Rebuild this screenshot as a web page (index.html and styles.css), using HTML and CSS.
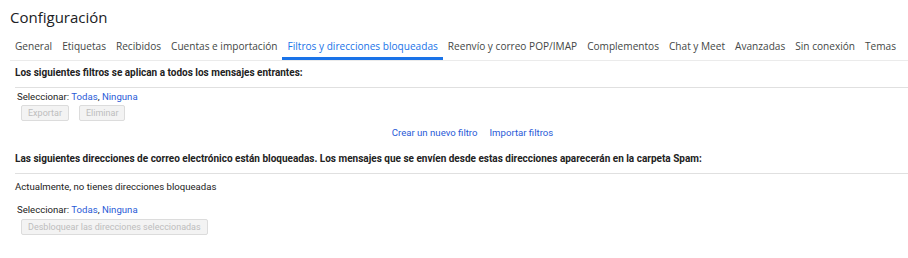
FILE: index.html
```html
<!DOCTYPE html>
<html lang="es">
<head>
<meta charset="utf-8">
<title>Configuración</title>
<link rel="stylesheet" href="styles.css">
</head>
<body>
<div class="page">
  <h1 class="title">Configuración</h1>
  <nav class="tabs">
    <a class="tab">General</a>
    <a class="tab">Etiquetas</a>
    <a class="tab">Recibidos</a>
    <a class="tab">Cuentas e importación</a>
    <a class="tab active">Filtros y direcciones bloqueadas</a>
    <a class="tab">Reenvío y correo POP/IMAP</a>
    <a class="tab">Complementos</a>
    <a class="tab">Chat y Meet</a>
    <a class="tab">Avanzadas</a>
    <a class="tab">Sin conexión</a>
    <a class="tab">Temas</a>
  </nav>
  <section class="section">
    <h2 class="heading">Los siguientes filtros se aplican a todos los mensajes entrantes:</h2>
    <div class="select">Seleccionar: <a class="link">Todas</a>, <a class="link">Ninguna</a></div>
    <div class="buttons">
      <button class="btn" disabled>Exportar</button>
      <button class="btn" disabled>Eliminar</button>
    </div>
    <div class="actions">
      <a class="link">Crear un nuevo filtro</a>
      <a class="link">Importar filtros</a>
    </div>
  </section>
  <section class="section second">
    <h2 class="heading">Las siguientes direcciones de correo electrónico están bloqueadas. Los mensajes que se envíen desde estas direcciones aparecerán en la carpeta Spam:</h2>
    <p class="empty">Actualmente, no tienes direcciones bloqueadas</p>
    <div class="select">Seleccionar: <a class="link">Todas</a>, <a class="link">Ninguna</a></div>
    <div class="buttons">
      <button class="btn" disabled>Desbloquear las direcciones seleccionadas</button>
    </div>
  </section>
</div>
</body>
</html>
```
FILE: styles.css
```css
* { box-sizing: border-box; }
html, body { margin: 0; padding: 0; background: #fff; }
body {
  font-family: Roboto, "Liberation Sans", Arial, sans-serif;
  font-size: 9.6px;
  color: #222;
}
.page { padding: 0 0 0 10px; }
.title {
  margin: 0;
  padding-top: 6px;
  height: 31px;
  font-family: "Open Sans", Roboto, sans-serif;
  font-weight: 400;
  font-size: 15px;
  line-height: 22px;
  color: #202124;
}
.tabs {
  display: flex;
  border-bottom: 1px solid #ebebeb;
  height: 30px;
}
.tab {
  display: block;
  padding: 7px 5px 0;
  height: 29px;
  font-family: "Open Sans", Roboto, sans-serif;
  font-size: 10.1px;
  line-height: 16px;
  color: #444746;
  white-space: nowrap;
  border-bottom: 3px solid transparent;
}
.tab:first-child { padding-left: 5px; }
.tab.active {
  color: #1a73e8;
  border-bottom-color: #1a73e8;
}
.section { padding-left: 5px; }
.heading {
  margin: 0;
  font-size: 10px;
  font-weight: 700;
  color: #222;
  padding: 5px 0 0;
  height: 27px;
  line-height: 14px;
  border-bottom: 1px solid #e0e0e0;
}
.select {
  padding-left: 2px;
  margin-top: 3px;
  line-height: 12px;
  color: #222;
}
.link { color: #2a5bd7; cursor: pointer; }
.buttons {
  display: flex;
  gap: 10px;
  margin-top: 2px;
  padding-left: 6px;
}
.btn {
  font-family: Roboto, "Liberation Sans", Arial, sans-serif;
  font-size: 9px;
  color: #bdbdbd;
  background: #f3f3f3;
  border: 1px solid #dcdcdc;
  border-radius: 2px;
  height: 16px;
  padding: 0 6px;
  line-height: 14px;
}
.actions {
  display: flex;
  justify-content: center;
  gap: 12px;
  padding: 6px 0 0 22px;
  line-height: 12px;
  height: 24px;
}
.second .heading { padding-top: 7px; height: 29px; }
.empty { margin: 7px 0 0; line-height: 12px; height: 12px; }
.second .select { margin-top: 11px; }
.second .buttons { margin-top: 3px; }
```
